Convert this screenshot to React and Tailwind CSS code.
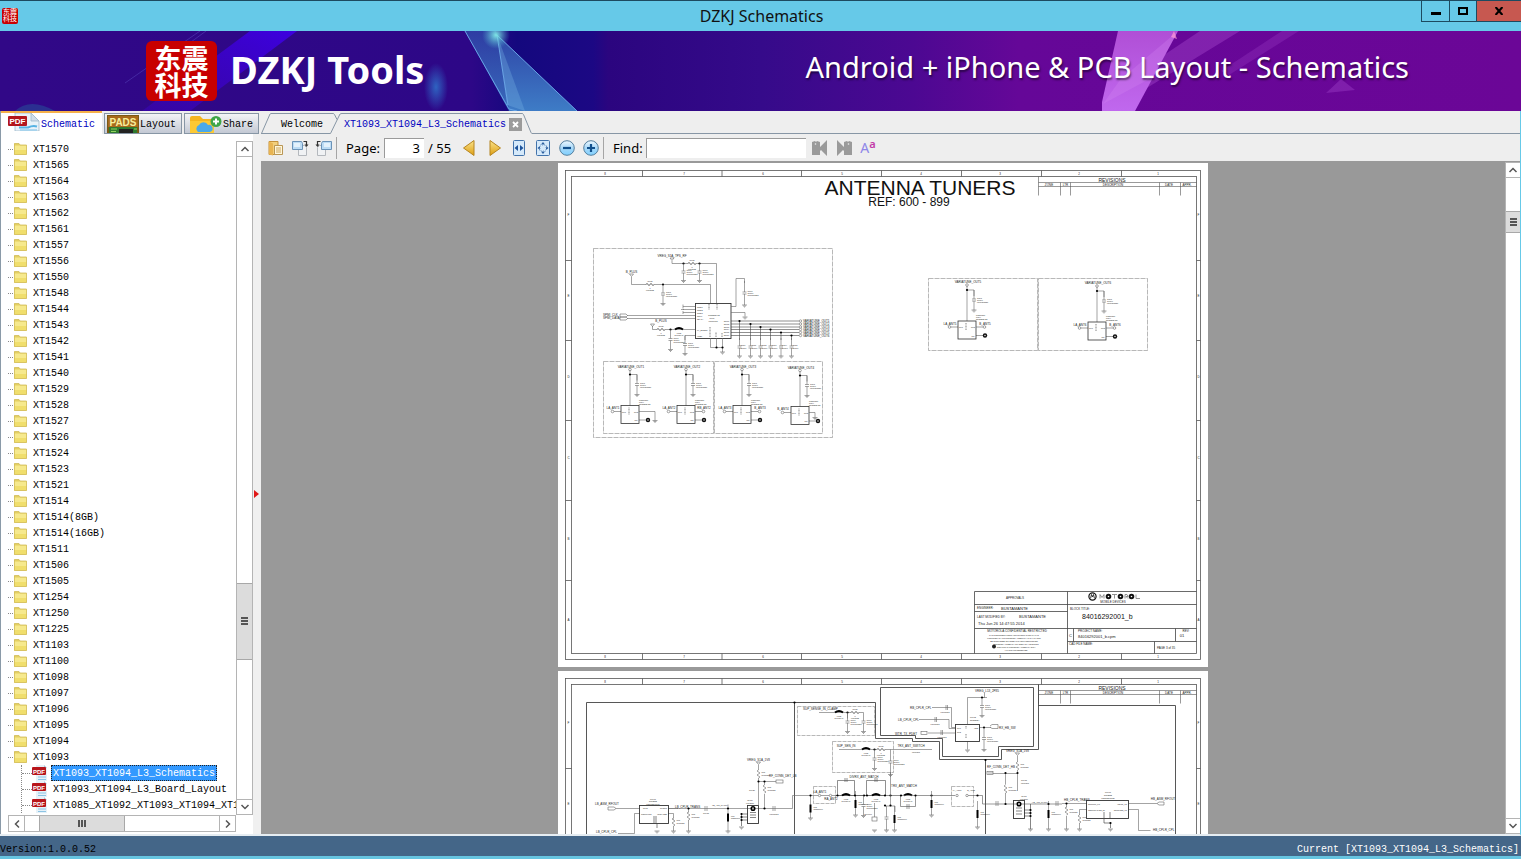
import React, { useState } from 'react';
import { clsx } from 'clsx';

const FOLDERS = [
  'XT1570', 'XT1565', 'XT1564', 'XT1563', 'XT1562', 'XT1561', 'XT1557', 'XT1556',
  'XT1550', 'XT1548', 'XT1544', 'XT1543', 'XT1542', 'XT1541', 'XT1540', 'XT1529',
  'XT1528', 'XT1527', 'XT1526', 'XT1524', 'XT1523', 'XT1521', 'XT1514', 'XT1514(8GB)',
  'XT1514(16GB)', 'XT1511', 'XT1506', 'XT1505', 'XT1254', 'XT1250', 'XT1225', 'XT1103',
  'XT1100', 'XT1098', 'XT1097', 'XT1096', 'XT1095', 'XT1094', 'XT1093',
];

const FILES = [
  'XT1093_XT1094_L3_Schematics',
  'XT1093_XT1094_L3_Board_Layout',
  'XT1085_XT1092_XT1093_XT1094_XT1095_L3',
];

/* ---------- small icons ---------- */

function FolderIcon() {
  return (
    <svg className="h-4 w-[15px] shrink-0" viewBox="0 0 15 16">
      <path d="M1 2.500h5l1 1.500h6.500v9.500H1z" fill="#e3cf62" />
      <path d="M1 4.500h12.500v9H1z" fill="#f6e98d" />
      <path d="M1 9h12.500v4.500H1z" fill="#f0de6c" />
      <path d="M1.500 13.500V2.500h4.500l1 1.500h6.500v9.500z" fill="none" stroke="#d2bd5a" strokeWidth="0.800" />
    </svg>
  );
}

function PdfIcon() {
  return (
    <svg className="h-4 w-4 shrink-0" viewBox="0 0 16 16">
      <path d="M4 0h8l3 3v13H4z" fill="#e6f1f8" />
      <path d="M6 12h8M6 14.500h8" stroke="#8cc4e4" strokeWidth="1" />
      <path d="M12 0l3 3h-3z" fill="#a8c4d8" />
      <rect x="0" y="2" width="14" height="8" rx="1" fill="#b8151b" />
      <text x="7" y="8.500" textAnchor="middle" fontFamily="Liberation Sans" fontWeight="bold" fontSize="6" fill="#fff">PDF</text>
    </svg>
  );
}

function PdfTabIcon() {
  return (
    <svg className="h-[18px] w-8 shrink-0" viewBox="0 0 32 18">
      <path d="M7 0h16l8 8v10H7z" fill="#e9f3f9" stroke="#9fb9cb" strokeWidth="0.800" />
      <path d="M23 0v8h8z" fill="#cfdde8" stroke="#9fb9cb" strokeWidth="0.800" />
      <path d="M11 14.500h9c4-2 6-2 9-1" stroke="#57b3e3" strokeWidth="2" fill="none" />
      <path d="M12 17h17" stroke="#9bd0ee" strokeWidth="1.500" />
      <rect x="0" y="3" width="19" height="10" rx="1" fill="#b3161c" />
      <text x="9.500" y="11" textAnchor="middle" fontFamily="Liberation Sans" fontWeight="bold" fontSize="8" fill="#fff">PDF</text>
    </svg>
  );
}

function PadsIcon() {
  return (
    <svg className="h-[18px] w-8 shrink-0" viewBox="0 0 32 18">
      <rect width="32" height="18" fill="#7b5a14" />
      <rect x="1" y="1" width="30" height="11" fill="#a86a1c" />
      <rect x="2" y="12" width="28" height="6" fill="#2f7a2e" />
      <path d="M12 18v-4h14v4" fill="#222" />
      <path d="M4 14h6M4 16.500h5M27 14h3" stroke="#8fd35e" />
      <text x="16" y="10.500" textAnchor="middle" fontFamily="Liberation Sans" fontWeight="bold" fontSize="10" fill="#f7ee9c">PADS</text>
    </svg>
  );
}

function ShareIcon() {
  return (
    <svg className="h-[18px] w-8 shrink-0" viewBox="0 0 32 18">
      <path d="M0 3q0-2 2-2h8l3 3h9q2 0 2 2v12H0z" fill="#f5b51f" />
      <path d="M0 6h24v12H0z" fill="#fcc934" />
      <path d="M8 17a4 4 0 0 1 1-7 5 5 0 0 1 9 0 3.500 3.500 0 0 1 2 7z" fill="#4aa9ea" />
      <circle cx="26" cy="6.500" r="5.500" fill="#3fa648" />
      <path d="M26 3.500v6M23 6.500h6" stroke="#fff" strokeWidth="2" />
    </svg>
  );
}

function OpenIcon() {
  return (
    <svg className="size-4" viewBox="0 0 16 16">
      <path d="M1 1.500h9v13H1z" fill="#f2cf7c" stroke="#c4913b" />
      <path d="M1 1.500l4 2v12l-4-1z" fill="#e8b452" />
      <path d="M6.500 5.500h8v9h-8z" fill="#fff7dd" stroke="#b99655" />
      <path d="M8 8h5M8 10h5M8 12h5" stroke="#caa55c" />
    </svg>
  );
}

function RotateIcon({ flip }) {
  return (
    <svg className="h-4 w-[18px]" viewBox="0 0 18 16">
      <g transform={flip ? 'translate(18 0) scale(-1 1)' : undefined}>
        <path d="M7.500 5.500h6l2 2v8h-8z" fill="#f0f2f4" stroke="#b4b8bd" />
        <path d="M1.500 1.500h9l1 2v6h-10z" fill="#bcdcf5" stroke="#6b93b8" />
        <path d="M3 3h6v4H3z" fill="#e4f2fc" />
        <path d="M12.500 1.500h3v4" fill="none" stroke="#333" strokeWidth="1.200" />
        <path d="M13.500 4.500h4l-2 2.500z" fill="#333" />
      </g>
    </svg>
  );
}

function ArrowIcon({ right }) {
  return (
    <svg className="size-4" viewBox="0 0 16 16">
      <defs>
        <linearGradient id="gold" x1="0" y1="0" x2="0" y2="1">
          <stop offset="0" stopColor="#fbe48c" />
          <stop offset="1" stopColor="#dd9e12" />
        </linearGradient>
      </defs>
      <path d={right ? 'M3 0.500L13.500 8L3 15.500z' : 'M13 0.500L2.500 8L13 15.500z'} fill="url(#gold)" stroke="#b58420" />
    </svg>
  );
}

function FitIcon({ page }) {
  return (
    <svg className="size-4" viewBox="0 0 16 16">
      <rect x={page ? 1.5 : 2.5} y="0.500" width={page ? 13 : 11} height="15" rx="1" fill="#d5e9fa" stroke="#4273ab" />
      {page ? (
        <>
          <path d="M8 2l2 2.500H6zM8 14l2-2.500H6zM2.500 8L5 6v4zM13.500 8L11 6v4z" fill="#2a5d9e" />
          <rect x="5" y="5" width="6" height="6" fill="none" stroke="#7fa4cc" strokeDasharray="1 1" />
        </>
      ) : (
        <path d="M3.500 8L7 5v6zM12.500 8L9 5v6z" fill="#1e549c" />
      )}
    </svg>
  );
}

function ZoomIcon({ plus }) {
  return (
    <svg className="size-4" viewBox="0 0 16 16">
      <defs>
        <linearGradient id="ball" x1="0" y1="0" x2="0" y2="1">
          <stop offset="0" stopColor="#eef8ff" />
          <stop offset="0.500" stopColor="#a8d8f8" />
          <stop offset="1" stopColor="#7fd0ff" />
        </linearGradient>
      </defs>
      <circle cx="8" cy="8" r="7.300" fill="url(#ball)" stroke="#55809f" />
      <path d={plus ? 'M4 8h8M8 4v8' : 'M4 8h8'} stroke="#12508c" strokeWidth="2.200" />
    </svg>
  );
}

function FindIcon({ next }) {
  return (
    <svg className="size-4" viewBox="0 0 16 16">
      <g transform={next ? 'translate(16 0) scale(-1 1)' : undefined} fill="#9a9a9a">
        <path d="M0 2l3-1 1 1 1-1 3 1v5l7-7v16l-6-6-1 1v4H0z" />
        <circle cx="3.500" cy="4" r="0.800" fill="#eee" />
      </g>
    </svg>
  );
}

function Chevron({ dir }) {
  const turn = { up: 0, right: 90, down: 180, left: 270 }[dir];
  return (
    <svg className="size-[10px]" viewBox="0 0 10 10">
      <path d="M1.500 7L5 3.500L8.500 7" transform={`rotate(${turn} 5 5)`} fill="none" stroke="#555" strokeWidth="1.500" />
    </svg>
  );
}

/* ---------- window chrome ---------- */

function Seal({ className, textClass }) {
  return (
    <div className={clsx('grid place-content-center bg-[#c80000] text-center text-white', className)}>
      <div className={textClass}>东震</div>
      <div className={textClass}>科技</div>
    </div>
  );
}

function TitleBar() {
  return (
    <header className="flex h-[31px] shrink-0 border-t border-[#1d4a60] bg-[#66c9e8]">
      <div className="flex flex-1 items-center pl-[2px]">
        <Seal className="size-4 rounded-xs" textClass="text-[7px] leading-[7px]" />
      </div>
      <h1 className="pt-1 font-['Noto_Sans'] text-[16px] leading-[22px] text-[#111]">DZKJ Schematics</h1>
      <div className="flex flex-1 items-start justify-end">
        <button aria-label="Minimize" className="flex h-[21px] w-[29px] items-center justify-center border border-t-0 border-[#1d4a60]">
          <span className="mt-1 h-[3px] w-[10px] bg-black" />
        </button>
        <button aria-label="Maximize" className="flex h-[21px] w-[26px] items-center justify-center border-b border-[#1d4a60]">
          <span className="h-2 w-[10px] border-2 border-black" />
        </button>
        <button aria-label="Close" className="flex h-[21px] w-[45px] items-center justify-center border-b border-l border-[#1d4a60] bg-[#c75850]">
          <svg className="size-2" viewBox="0 0 8 8">
            <path d="M0.500 0L7.500 8M7.500 0L0.500 8" stroke="#000" strokeWidth="2.200" />
          </svg>
        </button>
      </div>
    </header>
  );
}

function BannerArt() {
  return (
    <svg className="absolute inset-0 h-full w-full" viewBox="0 0 1521 80" preserveAspectRatio="none">
      <defs>
        <linearGradient id="base" x1="0" x2="1" y1="0" y2="0">
          <stop offset="0" stopColor="#310887" />
          <stop offset="0.310" stopColor="#2d0787" />
          <stop offset="0.340" stopColor="#14087e" />
          <stop offset="0.390" stopColor="#1c0884" />
          <stop offset="0.400" stopColor="#2b057f" />
          <stop offset="0.500" stopColor="#350a8a" />
          <stop offset="0.600" stopColor="#4c0892" />
          <stop offset="0.670" stopColor="#650798" />
          <stop offset="1" stopColor="#6b0697" />
        </linearGradient>
        <linearGradient id="beam" x1="1" y1="0" x2="0" y2="1">
          <stop offset="0" stopColor="#3d00e0" />
          <stop offset="1" stopColor="#3a05b4" stopOpacity="0.600" />
        </linearGradient>
        <linearGradient id="teal" x1="0" y1="0" x2="0" y2="1">
          <stop offset="0" stopColor="#2f46a8" />
          <stop offset="1" stopColor="#3e7cc6" />
        </linearGradient>
        <linearGradient id="pink" x1="0" y1="0" x2="0" y2="1">
          <stop offset="0" stopColor="#b04fd6" />
          <stop offset="1" stopColor="#c068ee" />
        </linearGradient>
        <radialGradient id="glow">
          <stop offset="0" stopColor="#2f7ad0" />
          <stop offset="1" stopColor="#2f7ad0" stopOpacity="0" />
        </radialGradient>
        <radialGradient id="spark">
          <stop offset="0" stopColor="#7fe6e6" />
          <stop offset="1" stopColor="#4fb0d0" stopOpacity="0" />
        </radialGradient>
      </defs>
      <rect width="1521" height="80" fill="url(#base)" />
      <path d="M250 0h47L190 80h-48z" fill="url(#beam)" />
      <path d="M200 0l-75 52M206 0l-60 44" stroke="#5a49c0" strokeOpacity="0.500" />
      <path d="M15 80q15-14 40 0z" fill="#25559c" fillOpacity="0.500" />
      <ellipse cx="436" cy="56" rx="12" ry="24" fill="url(#glow)" fillOpacity="0.800" />
      <path d="M465 0h31l13 80z" fill="url(#teal)" fillOpacity="0.850" />
      <path d="M497 4l80 76h-68z" fill="url(#teal)" />
      <path d="M497 4l10 70 18 6z" fill="#7db8e8" fillOpacity="0.300" />
      <path d="M465 0l44 78 8 2M497 4l11 70M497 4l80 76" stroke="#68a5e6" fill="none" />
      <circle cx="496" cy="4" r="14" fill="url(#spark)" />
      <path d="M1200 0h40l-108 66-10-14z" fill="#a94cd0" fillOpacity="0.400" />
      <path d="M1282 0h17l-70 44-8-4z" fill="#a94cd0" fillOpacity="0.250" />
      <path d="M1118 0h60l-43 80h-33v-9z" fill="url(#pink)" />
      <path d="M1178 0l-25 46-50 27 17-24z" fill="#d68cf4" fillOpacity="0.250" />
      <path d="M1341 48l14 11-29 3z" fill="#a94cd0" fillOpacity="0.350" />
      <path d="M1174 0l3 8-6-2z" fill="#ff9ad6" fillOpacity="0.700" />
    </svg>
  );
}

function Banner() {
  return (
    <div className="relative h-20 shrink-0 overflow-hidden">
      <BannerArt />
      <div className="relative flex h-full items-center justify-between pr-28 pl-[146px]">
        <div className="flex items-center gap-[13px]">
          <Seal
            className="h-[60px] w-[71px] rounded-md"
            textClass="font-['Noto_Sans_CJK_SC',sans-serif] text-[27px] leading-[27px] font-bold"
          />
          <span className="pb-1 font-['Noto_Sans'] text-[38px] leading-10 font-bold text-white">DZKJ Tools</span>
        </div>
        <span className="pb-2 font-['Noto_Sans'] text-[29px] leading-8 text-white [text-shadow:1px_2px_2px_rgba(0,0,0,0.5)]">
          Android + iPhone &amp; PCB Layout - Schematics
        </span>
      </div>
    </div>
  );
}

/* ---------- scroll bars ---------- */

function VScroll({ before, after, thumb, className }) {
  return (
    <div className={clsx('flex shrink-0 flex-col border-[#b4b4b4] bg-white', className)}>
      <button aria-label="Scroll up" className="flex h-4 items-center justify-center border-y border-[#b4b4b4]">
        <Chevron dir="up" />
      </button>
      <div style={{ flexGrow: before }} />
      <div className={clsx('flex shrink-0 flex-col items-center justify-center gap-px border-y border-[#a8a8a8] bg-[#dcdcdc]', thumb)}>
        <span className="h-[2px] w-[7px] bg-[#555]" />
        <span className="h-[2px] w-[7px] bg-[#555]" />
        <span className="h-[2px] w-[7px] bg-[#555]" />
      </div>
      <div style={{ flexGrow: after }} />
      <button aria-label="Scroll down" className="flex h-4 items-center justify-center border-y border-[#b4b4b4]">
        <Chevron dir="down" />
      </button>
    </div>
  );
}

function HScroll() {
  return (
    <div className="flex h-[17px] flex-1 border-y border-[#b4b4b4] bg-white">
      <button aria-label="Scroll left" className="flex w-[17px] items-center justify-center border-x border-[#b4b4b4]">
        <Chevron dir="left" />
      </button>
      <div className="grow-[14]" />
      <div className="flex w-[86px] items-center justify-center gap-px border-x border-[#a8a8a8] bg-[#dcdcdc]">
        <span className="h-[7px] w-[2px] bg-[#555]" />
        <span className="h-[7px] w-[2px] bg-[#555]" />
        <span className="h-[7px] w-[2px] bg-[#555]" />
      </div>
      <div className="grow-[94]" />
      <button aria-label="Scroll right" className="flex w-[17px] items-center justify-center border-x border-[#b4b4b4]">
        <Chevron dir="right" />
      </button>
    </div>
  );
}

/* ---------- left side ---------- */

function SideTab({ icon, label, active, onClick, className }) {
  return (
    <button
      onClick={onClick}
      className={clsx(
        'flex items-start gap-px',
        active
          ? 'h-[23px] border-t-2 border-[#f5b04a] bg-white pr-[7px] pl-[7px] text-[#0000c0]'
          : 'mt-[2px] h-[21px] border border-[#8796a5] bg-linear-to-b from-[#f3f4f6] to-[#c3c9d4] pt-px pr-[5px]',
        className
      )}
    >
      {icon}
      <span className={clsx('leading-4', active ? 'pt-1' : 'pt-[2px]')}>{label}</span>
    </button>
  );
}

function Sidebar() {
  const [tab, setTab] = useState('Schematic');
  const [selected, setSelected] = useState(FILES[0]);

  return (
    <aside className="flex w-[261px] shrink-0 flex-col border-l border-[#8a9aa8] bg-white">
      <nav className="flex h-[23px] shrink-0 gap-[2px] bg-[#eee]">
        <SideTab icon={<PdfTabIcon />} label="Schematic" active={tab === 'Schematic'} onClick={() => setTab('Schematic')} />
        <SideTab icon={<PadsIcon />} label="Layout" active={tab === 'Layout'} onClick={() => setTab('Layout')} className="pl-[2px]" />
        <SideTab icon={<ShareIcon />} label="Share" active={tab === 'Share'} onClick={() => setTab('Share')} className="pl-[5px]" />
      </nav>
      <div className="flex min-h-0 flex-1">
        <div className="flex min-w-0 flex-1 flex-col pt-[7px] pb-[2px] pl-[7px]">
          <div className="flex min-h-0 flex-1">
            <ul className="min-w-0 flex-1 overflow-hidden">
              {FOLDERS.map((name) => (
                <li key={name}>
                  <button className="flex h-4 items-center leading-4">
                    <span className="w-[5px] border-t border-dotted border-[#888]" />
                    <FolderIcon />
                    <span className="pt-[2px] pl-[5px]">{name}</span>
                  </button>
                </li>
              ))}
              <li>
                <ul className="ml-[13px] border-l border-dotted border-[#888]">
                  {FILES.map((name) => (
                    <li key={name}>
                      <button onClick={() => setSelected(name)} className="flex h-4 items-center leading-4 whitespace-nowrap">
                        <span className="w-[10px] border-t border-dotted border-[#888]" />
                        <PdfIcon />
                        <span
                          className={clsx(
                            'ml-[3px] border px-px pt-px leading-[13px]',
                            name === selected ? 'border-dotted border-[#222] bg-[#3399ff] text-white' : 'border-transparent'
                          )}
                        >
                          {name}
                        </span>
                      </button>
                    </li>
                  ))}
                </ul>
              </li>
              <li className="pl-[5px]">
                <FolderIcon />
              </li>
            </ul>
            <VScroll before={425} after={139} thumb="h-[77px]" className="w-[17px] border-x" />
          </div>
          <div className="flex pr-[17px]">
            <HScroll />
          </div>
        </div>
        <div className="flex w-2 shrink-0 items-center bg-[#f0f0f0] pt-5">
          <svg className="h-2 w-[6px]" viewBox="0 0 6 8">
            <path d="M1 0l5 4-5 4z" fill="#e01818" />
          </svg>
        </div>
      </div>
    </aside>
  );
}

/* ---------- document tabs and tool bar ---------- */

function DocTabs() {
  return (
    <div className="flex h-[23px] shrink-0 items-end bg-[#eee]">
      <svg className="h-[21px] w-[10px]" viewBox="0 0 10 21">
        <path d="M0.500 20.500L9 1q0.500-0.500 1-0.500M0 20.500h10" fill="none" stroke="#8796a5" />
      </svg>
      <button className="h-[21px] border-y border-[#8796a5] pt-[2px] pr-[5px] pl-[10px] leading-[17px]">Welcome</button>
      <svg className="h-[21px] w-[14px]" viewBox="0 0 14 21">
        <path d="M0 20.500h2.500L12 1q0.500-0.500 2-0.500M0 0.500h5q1 0 1.500 1l2.500 5" fill="none" stroke="#8796a5" />
      </svg>
      <div className="flex h-[21px] items-center gap-[3px] border-t border-[#8796a5] pl-[2px]">
        <button className="pt-px leading-[19px] text-[#0000c0]">XT1093_XT1094_L3_Schematics</button>
        <button aria-label="Close tab" className="flex size-[13px] items-center justify-center bg-[#9b9b9b]">
          <svg className="size-[7px]" viewBox="0 0 7 7">
            <path d="M1 1l5 5M6 1L1 6" stroke="#fff" strokeWidth="1.800" />
          </svg>
        </button>
      </div>
      <svg className="h-[21px] w-[10px]" viewBox="0 0 10 21">
        <path d="M0 0.500q1 0 1.500 1L9 19.500q0.500 1 1 1" fill="none" stroke="#8796a5" />
      </svg>
      <div className="flex-1 border-b border-[#8796a5]" />
    </div>
  );
}

function ToolButton({ label, children }) {
  return (
    <button aria-label={label} className="flex size-6 items-center justify-center">
      {children}
    </button>
  );
}

function Toolbar() {
  return (
    <div className="flex h-7 shrink-0 items-center border-b border-[#999] bg-[#eee] pl-[3px] font-['Noto_Sans'] text-[13px] text-black">
      <ToolButton label="Open"><OpenIcon /></ToolButton>
      <ToolButton label="Rotate right"><RotateIcon /></ToolButton>
      <ToolButton label="Rotate left"><RotateIcon flip /></ToolButton>
      <span className="h-[22px] w-px bg-[#a5a5a5]" />
      <label htmlFor="page" className="w-[47px] pt-[2px] pl-[9px]">Page:</label>
      <input
        id="page"
        defaultValue="3"
        className="h-5 w-10 border-t border-l border-[#9a9a9a] bg-white pr-1 text-right"
      />
      <span className="w-[33px] pt-[2px] pl-1 whitespace-nowrap">/ 55</span>
      <ToolButton label="Previous page"><ArrowIcon /></ToolButton>
      <span className="w-[2px]" />
      <ToolButton label="Next page"><ArrowIcon right /></ToolButton>
      <ToolButton label="Fit width"><FitIcon /></ToolButton>
      <ToolButton label="Fit page"><FitIcon page /></ToolButton>
      <ToolButton label="Zoom out"><ZoomIcon /></ToolButton>
      <ToolButton label="Zoom in"><ZoomIcon plus /></ToolButton>
      <span className="h-[22px] w-px bg-[#a5a5a5]" />
      <label htmlFor="find" className="w-[42px] pt-[2px] pl-[9px]">Find:</label>
      <input id="find" className="mr-[2px] h-5 w-40 border-t border-l border-[#9a9a9a] bg-white px-1" />
      <ToolButton label="Find previous"><FindIcon /></ToolButton>
      <ToolButton label="Find next"><FindIcon next /></ToolButton>
      <ToolButton label="Match case">
        <span className="text-[14px] leading-4 text-[#8f86e8]">A</span>
        <span className="pb-2 text-[11px] leading-3 font-semibold text-[#c23ba8]">a</span>
      </ToolButton>
    </div>
  );
}

/* ---------- schematic symbols ---------- */

function T({ x, y, s = 3, a = 'middle', f = '#222', children }) {
  return <text x={x} y={y} fontSize={s} textAnchor={a} fill={f} stroke="none">{children}</text>;
}

function Dot({ x, y }) {
  return <circle cx={x} cy={y} r="1.100" fill="#000" stroke="none" />;
}

function Gnd({ x, y }) {
  return <path d={`M${x - 2.5} ${y}h5M${x - 1.5} ${y + 1}h3M${x - 0.5} ${y + 2}h1`} />;
}

// capacitor hanging from (x, y), ground at y + h
function Cap({ x, y, h = 18, label = true }) {
  const m = y + h / 2;
  return (
    <g>
      <path d={`M${x} ${y}V${m - 1}M${x - 2} ${m - 1}h4M${x - 2} ${m + 1}h4M${x} ${m + 1}V${y + h}`} />
      <Gnd x={x} y={y + h} />
      {label && (
        <>
          <T x={x + 3} y={m - 1} s={2} a="start">C603</T>
          <T x={x + 3} y={m + 1} s={2} a="start">100PF</T>
          <T x={x + 3} y={m + 3} s={2} a="start">0109308J21</T>
        </>
      )}
    </g>
  );
}

function Res({ x, y }) {
  return (
    <g>
      <path d={`M${x} ${y}l1-1.500 2 3 2-3 2 3 1-1.500`} fill="#fff" />
      <T x={x + 4} y={y - 3} s={2}>R602</T>
      <T x={x + 4} y={y + 4} s={2}>0</T>
      <T x={x + 4} y={y + 6} s={2}>0613952</T>
    </g>
  );
}

function VRes({ x, y }) {
  return (
    <g>
      <path d={`M${x} ${y}l-1.500 1 3 2-3 2 3 2-1.500 1`} fill="#fff" />
      <T x={x + 3} y={y + 3} s={2} a="start">R71</T>
      <T x={x + 3} y={y + 6} s={2} a="start">0613952</T>
    </g>
  );
}

function Coil({ x, y }) {
  return (
    <g>
      <path d={`M${x - 4} ${y}q4-3 8 0`} strokeWidth="2" stroke="#000" />
      <T x={x} y={y + 4} s={2}>L602</T>
      <T x={x} y={y + 6} s={2}>24091040</T>
    </g>
  );
}

function VCoil({ x, y, end }) {
  return (
    <g>
      <path d={`M${x} ${y}V${end}`} />
      <path d={`M${x} ${y + 9}v8`} strokeWidth="2" stroke="#000" />
      <Gnd x={x} y={end} />
      <T x={x + 3} y={y + 12} s={2} a="start">L78</T>
      <T x={x + 3} y={y + 14} s={2} a="start">NOSTUFF</T>
    </g>
  );
}

function Pole({ x, y, children }) {
  return (
    <g>
      <path d={`M${x - 2} ${y - 3}l2 2.500 2-2.500z`} fill="#fff" />
      {children && <T x={x} y={y - 4}>{children}</T>}
    </g>
  );
}

// antenna switch; (x, y) is the corner of its square
function Tuner({ x, y, name, left, right, drop = 16 }) {
  const cx = x + 9;
  const dropY = drop > 10 ? 15 : 11;
  return (
    <g>
      <T x={x + 10} y={y - 38}>{name}</T>
      <circle cx={cx} cy={y - 36} r="1.300" fill="#fff" />
      <path d={`M${cx} ${y - 35}V${y}M${cx} ${y - 31}h7v6M${x - 7} ${y + 6}h7M${x + 18} ${y + 14.5}h8`} />
      <Dot x={cx} y={y - 31} />
      <Cap x={cx + 7} y={y - 31} h={20} />
      <T x={x + 18} y={y - 5} s={2} a="start">U1200800</T>
      <T x={x + 18} y={y - 3} s={2} a="start">U604</T>
      <T x={x + 18} y={y - 1} s={2} a="start">5162852H23</T>
      <rect x={x} y={y} width="18" height="18" stroke="#333" strokeWidth="0.800" />
      <T x={x + 3} y={y + 7} s={2}>RF1</T>
      <T x={x + 15} y={y + 7} s={2}>RF2</T>
      <T x={x + 15} y={y + 15.5} s={2}>NC</T>
      <path d={`M${x + 8} ${y + 2}v7`} stroke="#333" strokeDasharray="1 0.500" />
      <circle cx={x - 8.5} cy={y + 6} r="1.300" fill="#fff" />
      <T x={x - 8} y={y + 3.5}>{left}</T>
      {right ? (
        <>
          <path d={`M${x + 18} ${y + 6}h7`} />
          <circle cx={x + 26.5} cy={y + 6} r="1.300" fill="#fff" />
          <T x={x + 27} y={y + 3.5}>{right}</T>
        </>
      ) : (
        <>
          <path d={`M${x + 18} ${y + 6}h${drop}V${y + dropY}`} />
          <Gnd x={x + 18 + drop} y={y + dropY} />
        </>
      )}
      <circle cx={x + 27} cy={y + 14.5} r="2.200" fill="#111" stroke="none" />
      <circle cx={x + 27} cy={y + 14.5} r="0.700" fill="#fff" stroke="none" />
    </g>
  );
}

function SheetFrame({ top }) {
  const cols = [642.5, 722, 801.5, 881.5, 961.5, 1041.5, 1121.5];
  const rows = [97.5, 177.5, 257.5, 337.5, 417.5];
  const y = top;
  return (
    <g stroke="#555" strokeWidth="0.800">
      <rect x="565.500" y={y + 7.5} width="635" height="489" />
      <rect x="571.500" y={y + 13.5} width="625" height="477" />
      {cols.map((c) => (
        <path key={c} d={`M${c} ${y + 7.5}v6M${c} ${y + 490.5}v6`} />
      ))}
      {rows.map((r) => (
        <path key={r} d={`M565.500 ${y + r}h6M1196.500 ${y + r}h4`} />
      ))}
      {['8', '7', '6', '5', '4', '3', '2', '1'].map((n, i) => (
        <g key={n}>
          <T x={605 + i * 79} y={y + 12}>{n}</T>
          <T x={605 + i * 79} y={y + 495}>{n}</T>
        </g>
      ))}
      {['F', 'E', 'D', 'C', 'B', 'A'].map((n, i) => (
        <g key={n}>
          <T x="568.500" y={y + 53 + i * 81}>{n}</T>
          <T x="1198.500" y={y + 53 + i * 81}>{n}</T>
        </g>
      ))}
      <path d={`M1038.500 ${y + 19.5}h158M1038.500 ${y + 23.5}h158M1038.500 ${y + 13.5}v19M1060.500 ${y + 19.5}v13M1070.500 ${y + 19.5}v13M1159.500 ${y + 19.5}v13M1180.500 ${y + 19.5}v13`} strokeWidth="0.600" />
      <T x="1112" y={y + 18.5} s={5}>REVISIONS</T>
      <T x="1049" y={y + 22.7}>ZONE</T>
      <T x="1065.500" y={y + 22.7}>LTR</T>
      <T x="1113" y={y + 22.7}>DESCRIPTION</T>
      <T x="1169" y={y + 22.7}>DATE</T>
      <T x="1187" y={y + 22.7}>APPR.</T>
    </g>
  );
}

function TitleBlock() {
  return (
    <g stroke="#444" strokeWidth="0.800">
      <path d="M974.500 653.500V591.500H1196.500M1067.500 591.500V653.500M974.500 604.500H1196.500M974.500 611.500h93M974.500 628.500H1196.500M1067.500 641.500h129M1073.500 628.500v13M1175.500 628.500v13M1154.500 641.500v12" />
      <T x="1015" y="598.500">APPROVALS</T>
      <T x="977" y="609" a="start">ENGINEER:</T>
      <T x="1001" y="609.500" s={4} a="start">BUSTAMANTE</T>
      <T x="977" y="617.500" a="start">LAST MODIFIED BY:</T>
      <T x="1019" y="618" s={4} a="start">BUSTAMANTE</T>
      <T x="978" y="624.500" s={4} a="start">Thu Jun 26 14:47:55 2014</T>
      <T x="1017" y="631.500">MOTOROLA CONFIDENTIAL RESTRICTED</T>
      <T x="1014" y="635.500" s={2}>THIS DOCUMENT CONTAINS INFORMATION THAT IS</T>
      <T x="1014" y="638.500" s={2}>PROPRIETARY TO MOTOROLA MOBILITY. IT SHALL NOT</T>
      <T x="1014" y="641.500" s={2}>BE DISCLOSED OR USED WITHOUT PERMISSION</T>
      <T x="1016" y="644.500" s={2}>MOTOROLA MOBILITY TRADEMARK HOLDINGS</T>
      <T x="1016" y="647.500" s={2}>COPYRIGHT MOTOROLA MOBILITY 2014</T>
      <T x="1016" y="650.500" s={2}>ALL RIGHTS RESERVED</T>
      <circle cx="994" cy="646.500" r="2" fill="#222" stroke="none" />
      <circle cx="1092.500" cy="596.500" r="3.600" strokeWidth="1.200" stroke="#111" />
      <path d="M1090.500 598.500l1-4 1 2.500 1-2.500 1 4" stroke="#111" />
      <path d="M1100 598.500v-4l2 3 2-3v4M1112 594.500h5M1114.500 594.500v4M1125 598.500v-4h2l1 2-2 0 2 2M1136 594.500v4h4" stroke="#777" />
      <g strokeWidth="2" stroke="#111">
        <circle cx="1108.500" cy="596.500" r="1.800" />
        <circle cx="1120.500" cy="596.500" r="1.800" />
        <circle cx="1131.500" cy="596.500" r="1.800" />
      </g>
      <T x="1113" y="603" s={3}>MOBILE DEVICES</T>
      <T x="1070" y="610" a="start">BLOCK TITLE:</T>
      <T x="1082" y="619" s={7} a="start" f="#111">84016292001_b</T>
      <T x="1070.500" y="636.500" s={4}>C</T>
      <T x="1078" y="631.500" a="start">PROJECT NAME:</T>
      <T x="1078" y="637.500" s={4} a="start">84016292001_b.cpm</T>
      <T x="1186" y="631.500">REV:</T>
      <T x="1182" y="637" s={4}>01</T>
      <T x="1069" y="644.500" a="start">CAD FILE NAME:</T>
      <T x="1166" y="649">PAGE 3 of 35</T>
    </g>
  );
}

function Sheet({ box, className, children }) {
  return (
    <svg className={clsx('w-[650px] shrink-0 bg-white', className)} viewBox={box} fontFamily="Liberation Sans, sans-serif" fill="none" stroke="#666" strokeWidth="0.600">
      {children}
    </svg>
  );
}

const OUTS = [
  [739.5, 321], [750.5, 324], [760.5, 327], [770.5, 329.5], [781, 332.5], [791.5, 335.5],
];

function SheetThree() {
  return (
    <Sheet box="558 163 650 504" className="h-[504px]">
      <SheetFrame top={163} />
      <T x="920" y="195" s={21} f="#111">ANTENNA TUNERS</T>
      <T x="909" y="206" s={12} f="#111">REF: 600 - 899</T>

      <g stroke="#888" strokeDasharray="5 1">
        <rect x="593.500" y="248.500" width="239" height="189" />
        <rect x="603.500" y="361.500" width="110" height="72" />
        <rect x="714.500" y="361.500" width="108" height="72" />
        <rect x="928.500" y="278.500" width="109" height="72" />
        <rect x="1038.500" y="278.500" width="109" height="72" />
      </g>

      {/* supply rails */}
      <Pole x={672} y={261}>VREG_S1A_TPS_RF</Pole>
      <path d="M672 261v2.500H716.500V303M631.500 277v7.500H710.500V303" />
      <Pole x={631.5} y={277}>B_PLUS</Pole>
      <Res x={688} y={263.5} />
      <Res x={646} y={284.5} />
      <Dot x={683.5} y={263.5} />
      <Dot x={699.5} y={263.5} />
      <Dot x={663} y={284.5} />
      <Cap x={683.5} y={263.5} h={17} />
      <Cap x={699.5} y={263.5} h={17} />
      <Cap x={663} y={284.5} h={19} />

      {/* tuner controller */}
      <rect x="695.500" y="303.500" width="35.500" height="35" stroke="#333" strokeWidth="0.900" />
      <path d="M683 306.500h12M683 309.500h12M683 312.500h12M683 304.500v4M681 309.500h3M683 311v3M627 315.500h68M627 318.500h68" />
      <path d="M620 314h6l1.500 1.500-1.500 1.500h-6zM620 317h6l1.500 1.500-1.500 1.500h-6z" />
      <T x="603" y="316" a="start">SPMI_CLK</T>
      <T x="603" y="319" a="start">SPMI_DATA</T>
      {['GND1', 'GND2', 'GND3', 'SCLK', 'SDATA'].map((p, i) => (
        <T key={p} x="697" y={307.5 + i * 3} s={2} a="start">{p}</T>
      ))}
      <T x="697" y="330.500" s={2} a="start">LX_BOOST</T>
      <T x="697" y="336.500" s={2} a="start">VREF</T>
      <T x="714" y="316" s={2}>5162852H12</T>
      <T x="712" y="319" s={2}>U600</T>
      <T x="713" y="322" s={2}>WTR1605</T>
      <path d="M709 304v6M717 304v6M710 337v-10M716 337v-5M722 337v-4" stroke="#333" strokeDasharray="1 0.500" />
      <path d="M731 306.500h5V278.500h8.500V283M731 312.500h14v4M710.500 338v9.500h12V352M716.500 338v9.500M722.500 338v9.500" />
      <Cap x={744.5} y={281} h={24} />
      <Gnd x={745} y={317} />
      <Gnd x={722.5} y={352} />
      <Dot x={716.5} y={347.5} />
      <Dot x={722.5} y={347.5} />
      <Pole x={652.5} y={327} />
      <T x="661" y="322">B_PLUS</T>
      <path d="M652.500 326v3.500H695M695 335.500H685V340" />
      <Res x={657} y={329.5} />
      <Dot x={670.5} y={329.5} />
      <Coil x={679} y={329.5} />
      <Cap x={670.5} y={329.5} h={20} />
      <Cap x={685} y={335.5} h={18} />

      {OUTS.map(([x, y], i) => (
        <g key={y}>
          <path d={`M731 ${y}H799M${x} ${y}V340`} stroke="#444" />
          <Dot x={x} y={y} />
          <Cap x={x} y={338} h={18} label={false} />
          <T x={x + 1} y={345.5} s={2} a="start">C61{i}</T>
          <T x={x + 1} y={349} s={2} a="start">100PF</T>
          <circle cx="800.500" cy={y} r="1.200" fill="#fff" />
          <T x="803" y={y + 1} a="start">VARIATUNE_OUT{i + 1}</T>
          <T x="729" y={y + 0.5} s={2} a="end">OUT{i + 1}</T>
        </g>
      ))}

      <Tuner x={621} y={405.5} name="VARIATUNE_OUT1" left="LA_ANT1" />
      <Tuner x={677} y={405.5} name="VARIATUNE_OUT2" left="LA_ANT2" right="RB_ANT2" />
      <Tuner x={733} y={405.5} name="VARIATUNE_OUT3" left="LA_ANT3" right="B_ANT3" />
      <Tuner x={791} y={406.5} name="VARIATUNE_OUT4" left="B_ANT4" drop={6} />
      <Tuner x={958} y={321} name="VARIATUNE_OUT5" left="LA_ANT5" right="B_ANT5" />
      <Tuner x={1088} y={322} name="VARIATUNE_OUT6" left="LA_ANT6" right="B_ANT6" />
      <TitleBlock />
    </Sheet>
  );
}

function SheetFour() {
  return (
    <Sheet box="558 671 650 504" className="h-[504px]">
      <SheetFrame top={671} />
      <g stroke="#444" strokeWidth="0.900">
        <path d="M586.500 840V702.500H875.500V738.500H912.500V741.500H939.500V759.500H1001.500V749.500H1038.500V684.500" />
        <path d="M880.500 687.500H1033.500V746.500H998.500V756.500H942.500V738.500H915.500V735.500H880.500z" />
        <path d="M794.500 702.500V840M985.500 759.500V840M1038.500 705.500H1175.500V840" />
      </g>
      <Dot x={794.5} y={702.5} />
      <Dot x={985.5} y={760} />
      <g stroke="#888" strokeDasharray="4 1">
        <rect x="797.500" y="706.500" width="77" height="29" />
        <rect x="832.500" y="741.500" width="61" height="31" />
        <rect x="813.500" y="786.500" width="22" height="17" />
        <rect x="951.500" y="786.500" width="22" height="20" />
      </g>

      {/* clamp and sense branches */}
      <T x="803" y="710" a="start">SUP_SENSE_IN_CLAMP</T>
      <path d="M819 712.500H863.500M847.500 712.500v6M839 749.500H932" />
      <Coil x={839} y={712.5} />
      <Res x={851} y={712.5} />
      <Dot x={847.5} y={712.5} />
      <Cap x={847.5} y={712.5} h={19} />
      <Cap x={863.5} y={712.5} h={19} />
      <T x="846" y="747">SUP_SEN_IN</T>
      <Coil x={866} y={749.5} />
      <Dot x={874.5} y={749.5} />
      <Res x={877} y={749.5} />
      <Cap x={874.5} y={749.5} h={19} />
      <Cap x={890.5} y={749.5} h={25} />
      <T x="911" y="747">TRX_ANT_SWITCH</T>
      <T x="912" y="752.500" s={2} a="start">0109308</T>

      {/* coupler block inside the stepped outline */}
      <T x="987" y="692">VREG_L13_2P85</T>
      <path d="M984.500 692.500v5H967.500V724M982 697.500h5M932 707.500H951.500V727.500h4M919 719.500h30v9h6.500M928 733h27M979.500 727.500H991M967.500 741.500v8" />
      <Dot x={982} y={697.5} />
      <Dot x={984} y={727.5} />
      <Cap x={982} y={697.5} h={18} />
      <Cap x={984} y={727.5} h={22} />
      <Gnd x={967.5} y={750} />
      <rect x="955.500" y="724.500" width="24" height="17" stroke="#333" strokeWidth="0.900" />
      <path d="M966 738v-4M966 726v3" stroke="#333" strokeDasharray="1 0.500" />
      <T x="959" y="728.500" s={2}>RF1</T>
      <T x="959" y="733" s={2}>RF2</T>
      <T x="976" y="728.500" s={2}>VDD</T>
      <T x="910" y="709" a="start">RB_CPLR_CPL</T>
      <T x="898" y="721" a="start">LB_CPLR_CPL</T>
      <T x="895" y="734.500" a="start">WTR_TX_PDET</T>
      <rect x="921" y="731.500" width="6" height="3" />
      <path d="M946 705v5M947.500 705v5M935 717v5M936.500 717v5M941 730v5M942.500 730v5" />
      <T x="945" y="712.500" s={2}>0109308J</T>
      <T x="935" y="724.500" s={2}>0109308J</T>
      <T x="942" y="738" s={2}>0109308J</T>
      <T x="970" y="718" s={2} a="start">U1402</T>
      <T x="970" y="720.500" s={2} a="start">5162852H</T>
      <path d="M990 726l2-1.500h6v4h-6l-2-1.500" />
      <T x="999" y="728.500" a="start">RX_HB_SW</T>

      {/* left coupler chain */}
      <T x="595" y="805" a="start">LB_ASM_RFOUT</T>
      <path d="M608 807h6l2 1.500-2 1.500h-6zM616 808.500h24M677.500 808.500H792.500V795.500H885M618 833.500H634.500V813.500H640M668 813.500h5.500V820" />
      <rect x="639.500" y="805.500" width="29" height="18" stroke="#333" strokeWidth="0.900" />
      <T x="643" y="809" s={2} a="start">RFIN</T>
      <T x="667" y="809" s={2} a="end">RFOUT</T>
      <T x="641" y="814.500" s={2} a="start">COUPLING</T>
      <T x="667" y="814.500" s={2} a="end">ISOLATED</T>
      <path d="M654 823v-7M656 823v-7M657 824v4M668 808.500h10" stroke="#333" />
      <T x="653" y="800" s={2}>U1401</T>
      <T x="653" y="802.300" s={2}>5162852</T>
      <T x="653" y="804.500" s={2}>LDC15869M19</T>
      <T x="675" y="807.500" a="start">LB_CPLR_TRANS</T>
      <VRes x={673.5} y={818} />
      <VRes x={688.5} y={812} />
      <path d="M673.500 826v5M688.500 808.500v4M688.500 820v11" />
      <Gnd x={657} y={831} />
      <Gnd x={673.5} y={831} />
      <Gnd x={688.5} y={831} />
      <Dot x={688.5} y={808.5} />
      <path d="M705 806v5M707 806v5M773 806v5M775 806v5" />
      <T x="706" y="814" s={2}>C1418</T>
      <T x="720" y="805.500" s={2}>LB_ANT_MATCH</T>
      <VCoil x={728} y={804.5} end={831} />
      <Dot x={728} y={808.5} />
      <rect x="747.500" y="805.500" width="11" height="18" stroke="#333" strokeWidth="0.900" />
      <circle cx="753" cy="808.500" r="1.800" strokeWidth="1.500" stroke="#000" />
      <path d="M741.500 813v13M741.500 814h6M741.500 817h6M741.500 820h6M750 812.500h6M750 815h6M750 817.500h6" stroke="#333" />
      <Dot x={741.5} y={814} />
      <Dot x={741.5} y={817} />
      <Dot x={741.5} y={820} />
      <Gnd x={741.5} y={827} />
      <T x="750" y="801" s={2}>J1400</T>
      <T x="750" y="803.500" s={2}>0903860</T>
      <Pole x={758.5} y={765}>VREG_S1A_1V8</Pole>
      <path d="M758.500 765v5M758.500 778V806M758.500 781.500H776M764.500 781.500V785M764.500 794V808" />
      <VRes x={758.5} y={770} />
      <VRes x={764.5} y={785} />
      <Dot x={758.5} y={781.5} />
      <Dot x={764.5} y={781.5} />
      <Dot x={764.5} y={808.5} />
      <T x="769" y="777" a="start">RF_CONN_DET_LB</T>
      <rect x="776" y="780" width="7" height="3" />
      <T x="752" y="791" s={2}>C1420</T>
      <T x="774" y="815" s={2}>0109308J</T>

      {/* matching network */}
      <T x="820" y="792.500">LA_ANT1</T>
      <T x="831" y="799.500">RA_ANT2</T>
      <circle cx="819.500" cy="795.500" r="1.200" fill="#fff" />
      <circle cx="830.500" cy="795.500" r="1.200" fill="#fff" />
      <path d="M836 795.500h64M837.500 795.500v-15h17v15M866.500 795.500v-15h19v15M845 778v4M847 778v4M875 778v4M877 778v4" stroke="#444" />
      <T x="864" y="777.500">DIVRX_ANT_MATCH</T>
      <Coil x={846} y={795.5} />
      <Coil x={876} y={795.5} />
      <VCoil x={810.5} y={795.5} end={818} />
      <VCoil x={855.5} y={791} end={815} />
      <Dot x={810.5} y={795.5} />
      <Dot x={837.5} y={795.5} />
      <Dot x={855} y={795.5} />
      <Dot x={864} y={795.5} />
      <Dot x={867} y={795.5} />
      <Dot x={885} y={795.5} />
      <Dot x={890.5} y={795.5} />
      <path d="M890.500 772V806M885 806h10V812M874.500 803v14" />
      <Cap x={863.5} y={795.5} h={20} />
      <rect x="872" y="817" width="5" height="4" />
      <T x="868" y="815" s={2}>SW1400</T>
      <Gnd x={874.5} y={830} />
      <Dot x={885} y={805.5} />
      <Dot x={890.5} y={805.5} />
      <Cap x={886.5} y={806} h={24} label={false} />
      <VCoil x={894.5} y={806} end={830} />
      <T x="904" y="787">TRX_ANT_MATCH</T>
      <Coil x={908} y={795.5} />
      <path d="M900 795.500H955M900.500 795.500v11h15v-11M907 804v5M909 804v5M967 795.500h15.500v8.500H1062" stroke="#555" />
      <Dot x={901} y={795.5} />
      <Dot x={915.5} y={795.5} />
      <Dot x={931.5} y={795.5} />
      <VCoil x={931.5} y={791} end={815} />
      <circle cx="957" cy="795.500" r="1.200" fill="#fff" />
      <circle cx="967" cy="795.500" r="1.200" fill="#fff" />
      <T x="957" y="791" s={2}>LA_ANT1</T>
      <T x="971" y="791" s={2}>B_ANT2</T>
      <Dot x={977.5} y={795.5} />
      <VCoil x={977.5} y={801} end={827} />

      {/* right coupler chain */}
      <Pole x={1017.5} y={756}>VREG_S1A_1V8</Pole>
      <path d="M1017.500 756v6M1017.500 770V791M988 773h5M993 773.500h24.500M1005.500 773.500v11M1005.500 793v11" />
      <rect x="987" y="771.500" width="6" height="3" />
      <VRes x={1017.5} y={762} />
      <VRes x={1005.5} y={785} />
      <Dot x={1005.5} y={773} />
      <Dot x={1017.5} y={773} />
      <Dot x={1005.5} y={804} />
      <T x="987" y="767.500" a="start">RF_CONN_DET_HB</T>
      <T x="1021" y="781" s={2} a="start">C1433</T>
      <T x="1021" y="784" s={2} a="start">0109308</T>
      <rect x="1013.500" y="800.500" width="11" height="18" stroke="#333" strokeWidth="0.900" />
      <circle cx="1019" cy="804" r="1.800" strokeWidth="1.500" stroke="#000" />
      <path d="M1030.500 804v25M1024 810h6M1024 813h6M1024 816h6M1016 808h6M1016 811h6M1016 814h6" stroke="#333" />
      <Dot x={1030.5} y={810} />
      <Dot x={1030.5} y={813} />
      <Dot x={1030.5} y={816} />
      <Gnd x={1030.5} y={829} />
      <T x="1024" y="797" s={2}>J1401</T>
      <T x="1024" y="799.500" s={2}>0903860</T>
      <T x="1040" y="803" s={2}>HB_ANT_MATCH</T>
      <VCoil x={1048.5} y={801} end={829} />
      <Dot x={1048.5} y={804} />
      <path d="M996 801v5M998 801v5M1056 801v5M1058 801v5M1062 803.500h25M1066.500 804v4M1066.500 816v13M1087 809.500h-7.500V815M1079.500 823v6" />
      <T x="1064" y="800.500" a="start">HB_CPLR_TRANS</T>
      <Dot x={1066.5} y={803.5} />
      <VRes x={1066.5} y={807} />
      <VRes x={1079.5} y={815} />
      <Gnd x={1066.5} y={829} />
      <Gnd x={1079.5} y={829} />
      <rect x="1086.500" y="800.500" width="42" height="18" stroke="#333" strokeWidth="0.900" />
      <T x="1088" y="804.500" s={2} a="start">OUTPUT_PT</T>
      <T x="1127" y="804.500" s={2} a="end">INPUT_PT</T>
      <T x="1088" y="810.500" s={2} a="start">TERMINATION_50</T>
      <T x="1127" y="810.500" s={2} a="end">COUPLED_PT</T>
      <path d="M1104 818v-6M1110 818v-6M1104 819v4h6.500V828" stroke="#333" />
      <Dot x={1110.5} y={823} />
      <Gnd x={1110.5} y={829} />
      <T x="1108" y="793" s={2}>U1403</T>
      <T x="1108" y="796" s={2}>5162852</T>
      <T x="1108" y="799" s={2}>LDC21897M20</T>
      <path d="M1129 803.500h28l2-1.500h5v3h-5l-2-1.500M1129 809.500h9.500V830.500h12" />
      <T x="1163" y="800">HB_ASM_RFOUT</T>
      <T x="1153" y="831" a="start">HB_CPLR_CPL</T>
      <T x="596" y="833" a="start">LB_CPLR_CPL</T>
    </Sheet>
  );
}

function Viewer() {
  return (
    <main className="flex min-w-0 flex-1 flex-col">
      <DocTabs />
      <Toolbar />
      <div className="flex min-h-0 flex-1">
        <div className="flex min-w-0 flex-1 flex-col items-center gap-1 overflow-hidden bg-[#999] pt-px">
          <SheetThree />
          <SheetFour />
        </div>
        <VScroll before={33} after={587} thumb="h-[22px]" className="w-[15px] border-l" />
      </div>
    </main>
  );
}

function App() {
  return (
    <div className="flex h-screen flex-col overflow-hidden bg-white font-['Liberation_Mono','Noto_Sans_CJK_SC',monospace] text-[10px] text-black">
      <TitleBar />
      <Banner />
      <div className="flex min-h-0 flex-1 border-r border-b-2 border-r-[#66c9e8] border-b-[#e6edf2]">
        <Sidebar />
        <Viewer />
      </div>
      <footer className="flex h-[23px] shrink-0 items-center justify-between border-b-[3px] border-[#66c4e0] bg-[#446688] pt-[6px] pr-[2px]">
        <span>Version:1.0.0.52</span>
        <span className="text-white">Current [XT1093_XT1094_L3_Schematics]</span>
      </footer>
    </div>
  );
}

export default App;
